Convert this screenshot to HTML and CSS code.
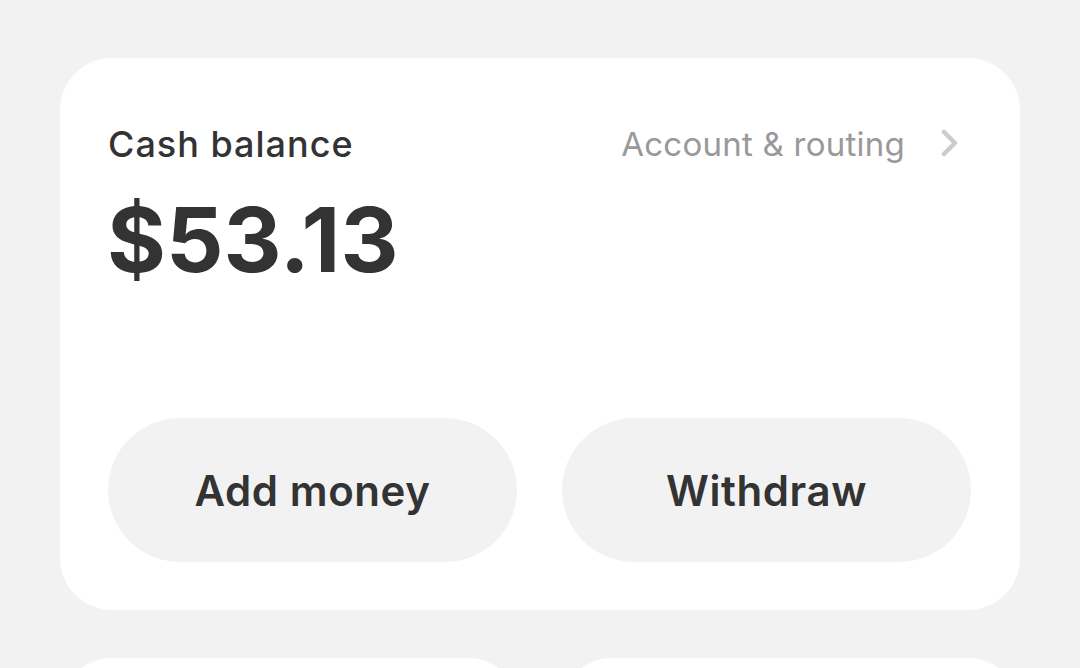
FILE: index.html
```html
<!DOCTYPE html>
<html lang="en">
<head>
<meta charset="utf-8">
<title>Cash balance</title>
<link rel="stylesheet" href="styles.css">
</head>
<body>
<main class="page">
  <section class="card balance-card">
    <div class="card-head">
      <h2 class="label">Cash balance</h2>
      <a class="routing" href="#">
        <span>Account &amp; routing</span>
        <svg class="chev" width="18" height="28" viewBox="0 0 18 28" aria-hidden="true">
          <path d="M3 3 L14 14 L3 25" fill="none" stroke="#cccccc" stroke-width="4.5" stroke-linecap="round" stroke-linejoin="round"/>
        </svg>
      </a>
    </div>
    <div class="amount">$53.13</div>
    <div class="actions">
      <button class="pill">Add money</button>
      <button class="pill">Withdraw</button>
    </div>
  </section>
  <div class="below">
    <div class="card small"></div>
    <div class="card small"></div>
  </div>
</main>
</body>
</html>
```
FILE: styles.css
```css
html, body {
  margin: 0;
  padding: 0;
  background: #f2f2f2;
}
body {
  font-family: "Inter", "Noto Sans", "Liberation Sans", sans-serif;
  color: #333333;
}
.page {
  height: 668px;
  box-sizing: border-box;
  overflow: hidden;
  padding: 58px 60px 0 60px;
  display: flex;
  flex-direction: column;
  gap: 48px;
}
.card {
  background: #ffffff;
  border-radius: 52px;
}
.balance-card {
  flex: none;
  height: 552px;
  box-sizing: border-box;
  padding: 0 49px 48px 48px;
  display: flex;
  flex-direction: column;
}
.card-head {
  display: flex;
  justify-content: space-between;
  align-items: center;
  height: 58px;
  margin-top: 57px;
}
.label {
  margin: 0;
  font-size: 36px;
  font-weight: 500;
  letter-spacing: 1px;
  color: #333333;
}
.routing {
  display: flex;
  align-items: center;
  gap: 36px;
  text-decoration: none;
  color: #999999;
  font-size: 33px;
  font-weight: 400;
  letter-spacing: 0.25px;
  margin-right: 12px;
}
.chev { display: block; margin-top: -2px; }
.amount {
  font-size: 90px;
  font-weight: 700;
  letter-spacing: 0px;
  line-height: 1;
  margin-top: 22px;
  margin-left: -1px;
  color: #333333;
}
.actions {
  margin-top: auto;
  display: flex;
  gap: 45px;
}
.pill {
  flex: 1;
  height: 144px;
  border: none;
  border-radius: 72px;
  background: #f2f2f2;
  color: #333333;
  font-family: inherit;
  font-size: 42px;
  font-weight: 600;
  letter-spacing: 0.6px;
}
.below {
  flex: none;
  display: flex;
  gap: 40px;
}
.small {
  flex: 1;
  height: 200px;
}
```
